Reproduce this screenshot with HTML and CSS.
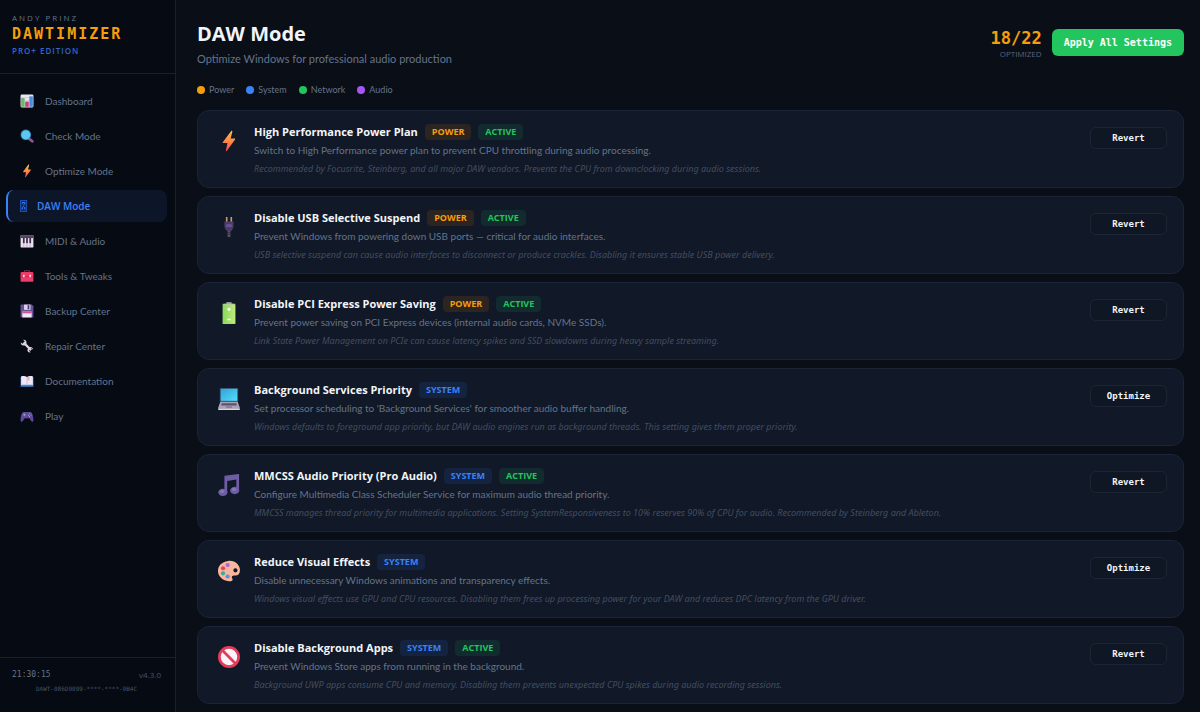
FILE: index.html
```html
<!DOCTYPE html>
<html lang="en">
<head>
  <meta charset="UTF-8" />
  <meta name="viewport" content="width=device-width, initial-scale=1.0" />
  <title>DAWTIMIZER</title>
  <link rel="stylesheet" href="styles.css">
</head>
<body>
  <svg class="defs" width="0" height="0" aria-hidden="true">
    <defs>
      <linearGradient id="boltFill" x1="0" y1="0" x2="0" y2="1">
        <stop offset="0" stop-color="#ffc04d" /><stop offset=".5" stop-color="#ff8a45" /><stop offset="1" stop-color="#ee4658" />
      </linearGradient>
      <linearGradient id="screenFill" x1="0" y1="0" x2="1" y2="1">
        <stop offset="0" stop-color="#2fa4dc" /><stop offset="1" stop-color="#54dcf8" />
      </linearGradient>
      <linearGradient id="batteryFill" x1="0" y1="0" x2="1" y2="0">
        <stop offset="0" stop-color="#86d95c" /><stop offset="1" stop-color="#c2ec7c" />
      </linearGradient>
      <symbol id="bolt" viewBox="0 0 24 24">
        <path d="M14.4 1 5.2 13.4c-.3.4 0 .9.5.9h4.6L8.6 22.4c-.1.8.6 1 1 .4l9-12.4c.3-.5 0-1-.5-1h-4.3L15.700 1.500c.1-.8-.8-1-1.300-.5z" fill="url(#boltFill)" />
      </symbol>
    </defs>
  </svg>

  <div class="app">
    <aside class="sidebar">
      <div class="brand">
        <div class="brand-by">ANDY PRINZ</div>
        <div class="brand-name">DAWTIMIZER</div>
        <div class="brand-edition">PRO+ EDITION</div>
      </div>

      <nav class="nav">
        <a class="nav-item" href="#dashboard">
          <svg class="nav-icon" viewBox="0 0 24 24"><rect x="1" y="1" width="22" height="22" rx="2" fill="#ece4f2" /><path d="M1 6h22M1 11h22M1 16h22" stroke="#c9bfd4" /><rect x="2" y="7" width="6" height="15" fill="#65b96a" /><rect x="9" y="13" width="6" height="9" fill="#c43c7c" /><rect x="16" y="4" width="6" height="18" fill="#4690d8" /></svg>
          Dashboard
        </a>
        <a class="nav-item" href="#check">
          <svg class="nav-icon" viewBox="0 0 24 24"><path d="m15 16 6 5" stroke="#8c5594" stroke-width="5" stroke-linecap="round" /><circle cx="10" cy="10" r="9" fill="#3e8eb8" /><circle cx="10" cy="10" r="7.500" fill="#58c9f0" /></svg>
          Check Mode
        </a>
        <a class="nav-item" href="#optimize">
          <svg class="nav-icon"><use href="#bolt" /></svg>
          Optimize Mode
        </a>
        <a class="nav-item active" href="#daw" aria-current="page">
          <svg class="nav-glyph" viewBox="0 0 7 12"><rect x=".5" y=".5" width="6" height="11" fill="#0f2a63" stroke="#1e4fae" /><path d="M2.200 3.800V2.500h2.600v1.300L3.500 5M2.200 9.500V7.800L3.500 6.500l1.300 1.300v1.700" fill="none" stroke="#3b82f6" /></svg>
          DAW Mode
        </a>
        <a class="nav-item" href="#midi">
          <svg class="nav-icon" viewBox="0 0 24 24"><rect x="1" y="2" width="22" height="21" rx="1" fill="#e9e1ef" /><rect x="1" y="2" width="22" height="5" fill="#54435c" /><path d="M6.500 7v9M12 7v9M17.500 7v9" stroke="#3c2c46" stroke-width="3" /><path d="M6.500 16v7M12 16v7M17.500 16v7" stroke="#a596b0" /></svg>
          MIDI &amp; Audio
        </a>
        <a class="nav-item" href="#tools">
          <svg class="nav-icon" viewBox="0 0 24 24"><path d="M8 6V3h8v3" fill="none" stroke="#6d3350" stroke-width="2" /><rect x="1" y="5" width="22" height="17" rx="2" fill="#ee3b68" /><path d="M1 13h22" stroke="#c22553" stroke-width="1.500" /><rect x="5" y="10" width="3" height="4" fill="#ffd5e2" /><rect x="16" y="10" width="3" height="4" fill="#ffd5e2" /></svg>
          Tools &amp; Tweaks
        </a>
        <a class="nav-item" href="#backup">
          <svg class="nav-icon" viewBox="0 0 24 24"><path d="M2 1h18l3 3v19H3l-2-2V2z" fill="#65509a" /><rect x="7" y="1" width="11" height="9" fill="#ddd4e8" /><rect x="13" y="2" width="3" height="7" fill="#4b3b70" /><rect x="4" y="13" width="16" height="10" fill="#eee5f7" /><rect x="4" y="13" width="16" height="3" fill="#cf568e" /></svg>
          Backup Center
        </a>
        <a class="nav-item" href="#repair">
          <svg class="nav-icon" viewBox="0 0 24 24"><path d="m6 6 13 13" stroke="#dbd4e3" stroke-width="4" /><path d="M5.500 1.500 8 4 7 7 4 8 1.500 5.500C.8 9.500 4 12 8 11l3-3c1-4-1.500-7.200-5.500-6.500zM22.500 18.500 20 16l-4 .5-.5 3.500 2.800 2.800c-3.500.7-6-1.500-5.500-5l3.700-4c4-.7 6.300 2 6 4.700z" fill="#dbd4e3" /></svg>
          Repair Center
        </a>
        <a class="nav-item" href="#docs">
          <svg class="nav-icon" viewBox="0 0 24 24"><rect x="1" y="5" width="22" height="17" rx="1" fill="#4487d8" /><path d="M2 4c4-1 7-1 10 1 3-2 6-2 10-1v15c-4-1-7-1-10 0-3-1-6-1-10 0z" fill="#eee8f4" /><path d="M12 5v14" stroke="#c2aec8" /><path d="M13 5h3v7l-1.500-1.500L13 12z" fill="#edabc2" /></svg>
          Documentation
        </a>
        <a class="nav-item" href="#play">
          <svg class="nav-icon" viewBox="0 0 24 24"><path d="M6 5h12c3 0 5 8 5 14 0 4-3 4-5 0l-2-3H8l-2 3c-2 4-5 4-5 0C1 13 3 5 6 5z" fill="#5d489c" /><path d="M5 10h5M7.500 7.500v5" stroke="#a395cc" stroke-width="1.500" /><circle cx="16.500" cy="8" r="1" fill="#dc6ca5" /><circle cx="19" cy="10.500" r="1" fill="#58b0e0" /><circle cx="14.500" cy="10.500" r="1" fill="#8bcf75" /><circle cx="16.500" cy="13" r="1" fill="#e0a860" /></svg>
          Play
        </a>
      </nav>

      <div class="sidebar-foot">
        <div class="foot-row">
          <span class="clock">21:30:15</span>
          <span class="version">v4.3.0</span>
        </div>
        <div class="license">DAWT-086D9099-****-****-9B4C</div>
      </div>
    </aside>

    <main class="main">
      <header class="page-head">
        <div>
          <h1>DAW Mode</h1>
          <p class="subtitle">Optimize Windows for professional audio production</p>
        </div>
        <div class="head-actions">
          <div class="score">
            <div class="score-value">18/22</div>
            <div class="score-label">OPTIMIZED</div>
          </div>
          <button class="apply" type="button">Apply All Settings</button>
        </div>
      </header>

      <div class="legend">
        <span class="legend-item"><i class="dot dot-power"></i>Power</span>
        <span class="legend-item"><i class="dot dot-system"></i>System</span>
        <span class="legend-item"><i class="dot dot-network"></i>Network</span>
        <span class="legend-item"><i class="dot dot-audio"></i>Audio</span>
      </div>

      <div class="cards">
        <section class="card">
          <svg class="card-icon"><use href="#bolt" /></svg>
          <div class="card-body">
            <div class="card-title"><h2>High Performance Power Plan</h2><span class="badge power">POWER</span><span class="badge on">ACTIVE</span></div>
            <p class="desc">Switch to High Performance power plan to prevent CPU throttling during audio processing.</p>
            <p class="note">Recommended by Focusrite, Steinberg, and all major DAW vendors. Prevents the CPU from downclocking during audio sessions.</p>
          </div>
          <button class="action" type="button">Revert</button>
        </section>

        <section class="card">
          <svg class="card-icon" viewBox="0 0 24 24"><path d="M9.500 1v6M14.500 1v6" stroke="#c69a6c" stroke-width="1.800" /><path d="M7 6h10v6l-2 4H9l-2-4z" fill="#4b3c62" /><path d="M9 9h6v3H9z" fill="#6852a0" /><path d="M12 16v7" stroke="#5c5064" stroke-width="3" /><path d="M10.500 18h3M10.500 20h3" stroke="#3b3148" /></svg>
          <div class="card-body">
            <div class="card-title"><h2>Disable USB Selective Suspend</h2><span class="badge power">POWER</span><span class="badge on">ACTIVE</span></div>
            <p class="desc">Prevent Windows from powering down USB ports — critical for audio interfaces.</p>
            <p class="note">USB selective suspend can cause audio interfaces to disconnect or produce crackles. Disabling it ensures stable USB power delivery.</p>
          </div>
          <button class="action" type="button">Revert</button>
        </section>

        <section class="card">
          <svg class="card-icon" viewBox="0 0 24 24"><rect x="9" y="0" width="6" height="3" rx="1" fill="#8f9b91" /><rect x="5" y="2" width="14" height="22" rx="2" fill="url(#batteryFill)" /><path d="M5 2.500h14M5 23.500h14" stroke="#b9c8a5" /><path d="M10.300 8h3.400M12 6.300v3.400M10.300 19h3.400" stroke="#fff" stroke-width="1.600" /></svg>
          <div class="card-body">
            <div class="card-title"><h2>Disable PCI Express Power Saving</h2><span class="badge power">POWER</span><span class="badge on">ACTIVE</span></div>
            <p class="desc">Prevent power saving on PCI Express devices (internal audio cards, NVMe SSDs).</p>
            <p class="note">Link State Power Management on PCIe can cause latency spikes and SSD slowdowns during heavy sample streaming.</p>
          </div>
          <button class="action" type="button">Revert</button>
        </section>

        <section class="card">
          <svg class="card-icon" viewBox="0 0 24 24"><rect x="2" y="0" width="20" height="15" rx="1" fill="#37566f" /><rect x="3" y="1" width="18" height="13" fill="url(#screenFill)" /><path d="M2.500 15h19l2.500 7H0z" fill="#aaa0b8" /><path d="M4 16.500h16l.6 2.500H3.400z" fill="#5c5469" /><path d="M9 20h6l.4 1.500H8.600z" fill="#82778f" /><rect x="0" y="22" width="24" height="2" rx="1" fill="#dcd3e4" /></svg>
          <div class="card-body">
            <div class="card-title"><h2>Background Services Priority</h2><span class="badge system">SYSTEM</span></div>
            <p class="desc">Set processor scheduling to 'Background Services' for smoother audio buffer handling.</p>
            <p class="note">Windows defaults to foreground app priority, but DAW audio engines run as background threads. This setting gives them proper priority.</p>
          </div>
          <button class="action" type="button">Optimize</button>
        </section>

        <section class="card">
          <svg class="card-icon" viewBox="0 0 24 24"><path d="M7 2 23 0v18h-3V6l-10 1.500V20H7z" fill="#6e5da4" /><ellipse cx="5.300" cy="20" rx="5" ry="4" fill="#6e5da4" /><ellipse cx="18.200" cy="18" rx="5" ry="4" fill="#6e5da4" /><ellipse cx="4.500" cy="19" rx="2.500" ry="1.600" fill="#8677b5" /><ellipse cx="17.400" cy="17" rx="2.500" ry="1.600" fill="#8677b5" /></svg>
          <div class="card-body">
            <div class="card-title"><h2>MMCSS Audio Priority (Pro Audio)</h2><span class="badge system">SYSTEM</span><span class="badge on">ACTIVE</span></div>
            <p class="desc">Configure Multimedia Class Scheduler Service for maximum audio thread priority.</p>
            <p class="note">MMCSS manages thread priority for multimedia applications. Setting SystemResponsiveness to 10% reserves 90% of CPU for audio. Recommended by Steinberg and Ableton.</p>
          </div>
          <button class="action" type="button">Revert</button>
        </section>

        <section class="card">
          <svg class="card-icon" viewBox="0 0 24 24"><path fill-rule="evenodd" d="M11 1C19 0 24 6 24 11c0 4-2 6-5 6-2 0-4 0-4 2 0 1 1 1 1 2 0 2-2 2.500-4 2.200C4 22.500 0 17 0 12 0 6 4 2 11 1zm8 8a2.300 2.300 0 1 0 0 4.600A2.300 2.300 0 0 0 19 9z" fill="#fbb59c" /><circle cx="10.500" cy="5.500" r="2.300" fill="#a56bd8" /><circle cx="5.500" cy="9" r="2.300" fill="#e04468" /><circle cx="5.500" cy="14.500" r="2.300" fill="#2eae9b" /><circle cx="10.500" cy="18" r="2.300" fill="#5c91dc" /></svg>
          <div class="card-body">
            <div class="card-title"><h2>Reduce Visual Effects</h2><span class="badge system">SYSTEM</span></div>
            <p class="desc">Disable unnecessary Windows animations and transparency effects.</p>
            <p class="note">Windows visual effects use GPU and CPU resources. Disabling them frees up processing power for your DAW and reduces DPC latency from the GPU driver.</p>
          </div>
          <button class="action" type="button">Optimize</button>
        </section>

        <section class="card">
          <svg class="card-icon" viewBox="0 0 24 24"><circle cx="12" cy="12" r="10.500" fill="#fbf3fa" stroke="#e23c5b" stroke-width="3" /><path d="m5 5 14 14" stroke="#e23c5b" stroke-width="3" /></svg>
          <div class="card-body">
            <div class="card-title"><h2>Disable Background Apps</h2><span class="badge system">SYSTEM</span><span class="badge on">ACTIVE</span></div>
            <p class="desc">Prevent Windows Store apps from running in the background.</p>
            <p class="note">Background UWP apps consume CPU and memory. Disabling them prevents unexpected CPU spikes during audio recording sessions.</p>
          </div>
          <button class="action" type="button">Revert</button>
        </section>
      </div>
    </main>
  </div>
</body>
</html>
```
FILE: styles.css
```css
* { box-sizing: border-box; }
body {
  margin: 0;
  background: #0a0e17;
  color: #f1f5f9;
  font-family: "Segoe UI", "Open Sans", sans-serif;
  font-size: 10px;
}
h1, h2, p { margin: 0; }
.defs { position: absolute; }
.app {
  display: flex;
  height: 100vh;
}

/* sidebar */
.sidebar {
  flex: 0 0 176px;
  display: flex;
  flex-direction: column;
  background: #060a13;
  border-right: 1px solid #182130;
}
.brand {
  padding: 11px 12px 16px;
  border-bottom: 1px solid #182130;
}
.brand-by {
  font-size: 8px;
  line-height: 13px;
  letter-spacing: 2px;
  color: #64748b;
}
.brand-name {
  font-family: "DejaVu Sans Mono", monospace;
  font-size: 15px;
  font-weight: bold;
  line-height: 20px;
  letter-spacing: 2px;
  color: #f59e0b;
}
.brand-edition {
  font-size: 8px;
  font-weight: 600;
  line-height: 13px;
  letter-spacing: 1px;
  color: #3566c4;
}
.nav {
  flex: 1;
  display: flex;
  flex-direction: column;
  gap: 3px;
  padding: 11px 8px 12px 6px;
}
.nav-item {
  display: flex;
  align-items: center;
  gap: 11px;
  height: 32px;
  padding: 0 12px;
  border-left: 2px solid transparent;
  border-radius: 8px;
  color: #64748b;
  font-family: "Segoe UI", "Lato", sans-serif;
  text-decoration: none;
}
.nav-item.active {
  gap: 10px;
  background: #0d1629;
  border-left-color: #3b82f6;
  color: #3b82f6;
  font-family: "Segoe UI", "Open Sans", sans-serif;
  font-weight: 600;
}
.nav-icon {
  width: 14px;
  height: 14px;
}
.nav-glyph {
  width: 7px;
  height: 12px;
}
.sidebar-foot {
  padding: 10px 14px 17px 12px;
  border-top: 1px solid #182130;
  color: #64748b;
}
.foot-row {
  display: flex;
  justify-content: space-between;
  align-items: center;
  line-height: 14px;
}
.clock {
  font-family: "DejaVu Sans Mono", monospace;
  font-size: 8px;
}
.version {
  font-size: 8px;
  color: #475569;
}
.license {
  font-family: "DejaVu Sans Mono", monospace;
  font-size: 6px;
  line-height: 13px;
  text-align: center;
  color: #475569;
}

/* page header */
.main {
  flex: 1;
  min-width: 0;
  overflow: hidden;
  padding: 20px 16px 0 21px;
}
.page-head {
  display: flex;
  justify-content: space-between;
  align-items: flex-start;
}
h1 {
  font-size: 20px;
  font-weight: 700;
  line-height: 28px;
}
.subtitle {
  font-family: "Segoe UI", "Lato", sans-serif;
  font-size: 11px;
  line-height: 22px;
  color: #64748b;
}
.head-actions {
  display: flex;
  align-items: flex-start;
  gap: 10px;
  margin-top: 9px;
}
.score { text-align: right; }
.score-value {
  font-family: "DejaVu Sans Mono", monospace;
  font-size: 17px;
  font-weight: bold;
  line-height: 18px;
  color: #f59e0b;
}
.score-label {
  font-size: 8px;
  line-height: 14px;
  color: #56647a;
}
button {
  font-family: "DejaVu Sans Mono", monospace;
  font-weight: bold;
  cursor: pointer;
}
.apply {
  padding: 0 12px;
  height: 27px;
  border: none;
  border-radius: 6px;
  background: #22c55e;
  color: #fff;
  font-size: 10px;
}
.legend {
  display: flex;
  gap: 12px;
  margin: 12px 0 13px;
  line-height: 15px;
  font-family: "Segoe UI", "Lato", sans-serif;
  font-size: 9px;
  color: #64748b;
}
.legend-item {
  display: flex;
  align-items: center;
  gap: 4px;
}
.dot {
  width: 8px;
  height: 8px;
  border-radius: 50%;
}
.dot-power { background: #f59e0b; }
.dot-system { background: #3b82f6; }
.dot-network { background: #22c55e; }
.dot-audio { background: #a855f7; }

/* cards */
.cards {
  display: flex;
  flex-direction: column;
  gap: 8px;
}
.card {
  display: flex;
  align-items: flex-start;
  gap: 14px;
  padding: 12px 16px 9px 20px;
  border: 1px solid #1a2436;
  border-radius: 12px;
  background: #111827;
}
.card-icon {
  flex: none;
  width: 22px;
  height: 22px;
  margin-top: 7px;
}
.card-body {
  flex: 1;
  min-width: 0;
}
.card-title {
  display: flex;
  align-items: center;
  gap: 7px;
  height: 18px;
}
h2 {
  font-size: 11px;
  font-weight: 700;
  line-height: 18px;
}
.badge {
  padding: 0 7px;
  border-radius: 4px;
  font-size: 9px;
  font-weight: 700;
  line-height: 16px;
}
.badge.power { background: #2c2420; color: #f59e0b; }
.badge.system { background: #142340; color: #3b82f6; }
.badge.on { background: #122b2e; color: #22c55e; }
.desc {
  font-family: "Segoe UI", "Lato", sans-serif;
  line-height: 19px;
  color: #64748b;
}
.note {
  font-family: "Segoe UI", "Noto Sans", sans-serif;
  font-size: 9px;
  font-style: italic;
  line-height: 18px;
  color: #414e61;
}
.action {
  width: 77px;
  height: 22px;
  margin-top: 4px;
  padding: 0;
  border: 1px solid #1c2536;
  border-radius: 6px;
  background: #0f1624;
  color: #f1f5f9;
  font-size: 9px;
}
```
